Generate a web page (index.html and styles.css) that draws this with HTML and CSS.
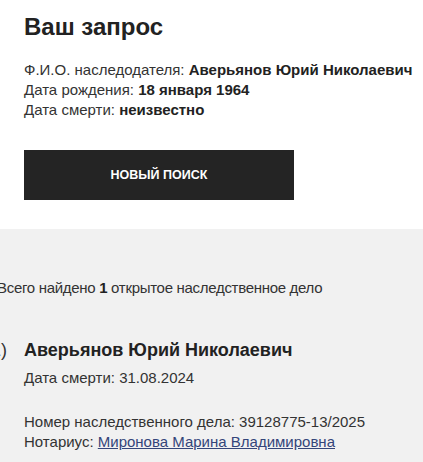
FILE: index.html
```html
<!DOCTYPE html>
<html lang="ru">
<head>
    <meta charset="UTF-8">
    <meta name="viewport" content="width=device-width, initial-scale=1.0">
    <title>Ваш запрос</title>
    <link rel="stylesheet" href="styles.css">
</head>
<body>

    <div class="request">
        <h1>Ваш запрос</h1>
        <div class="request-info">
            <div>Ф.И.О. наследодателя: <b>Аверьянов Юрий Николаевич</b></div>
            <div>Дата рождения: <b>18 января 1964</b></div>
            <div>Дата смерти: <b>неизвестно</b></div>
        </div>
        <button class="new-search">НОВЫЙ ПОИСК</button>
    </div>

    <div class="results">
        <p class="summary">Всего найдено <b>1</b> открытое наследственное дело</p>
        <div class="case">
            <span class="case-num">1)</span>
            <div class="case-body">
                <div class="case-name">Аверьянов Юрий Николаевич</div>
                <div class="case-death">Дата смерти: 31.08.2024</div>
                <div class="case-meta">
                    <div>Номер наследственного дела: 39128775-13/2025</div>
                    <div>Нотариус: <a href="#">Миронова Марина Владимировна</a></div>
                </div>
            </div>
        </div>
    </div>

</body>
</html>
```

FILE: styles.css
```css
body {
    font-family: "Liberation Sans", Arial, sans-serif;
    margin: 0;
    background-color: #fff;
    color: #222;
    font-size: 15px;
    line-height: 20px;
}
b {
    color: #222;
}
.request {
    padding: 12px 24px 29px;
    background: #fff;
}
.request h1 {
    margin: 0;
    font-size: 24px;
    line-height: 30px;
    font-weight: bold;
}
.request-info {
    margin-top: 18px;
    color: #333;
    white-space: nowrap;
}
.new-search {
    display: block;
    margin-top: 30px;
    width: 270px;
    height: 50px;
    border: none;
    background-color: #242424;
    color: #fff;
    font-family: inherit;
    font-size: 12.5px;
    font-weight: bold;
    cursor: pointer;
}
.results {
    background-color: #f1f1f1;
    padding: 49px 24px 40px;
    color: #333;
}
.summary {
    margin: 0 0 0 -27px;
    letter-spacing: -0.3px;
}
.case {
    display: flex;
    margin-top: 40px;
}
.case-num {
    width: 33px;
    margin-left: -33px;
    font-size: 18px;
    line-height: 24px;
}
.case-name {
    font-size: 18px;
    line-height: 24px;
    font-weight: bold;
    color: #222;
}
.case-death {
    margin-top: 6px;
}
.case-meta {
    margin-top: 24px;
}
.case-meta a {
    color: #34457a;
}
```
